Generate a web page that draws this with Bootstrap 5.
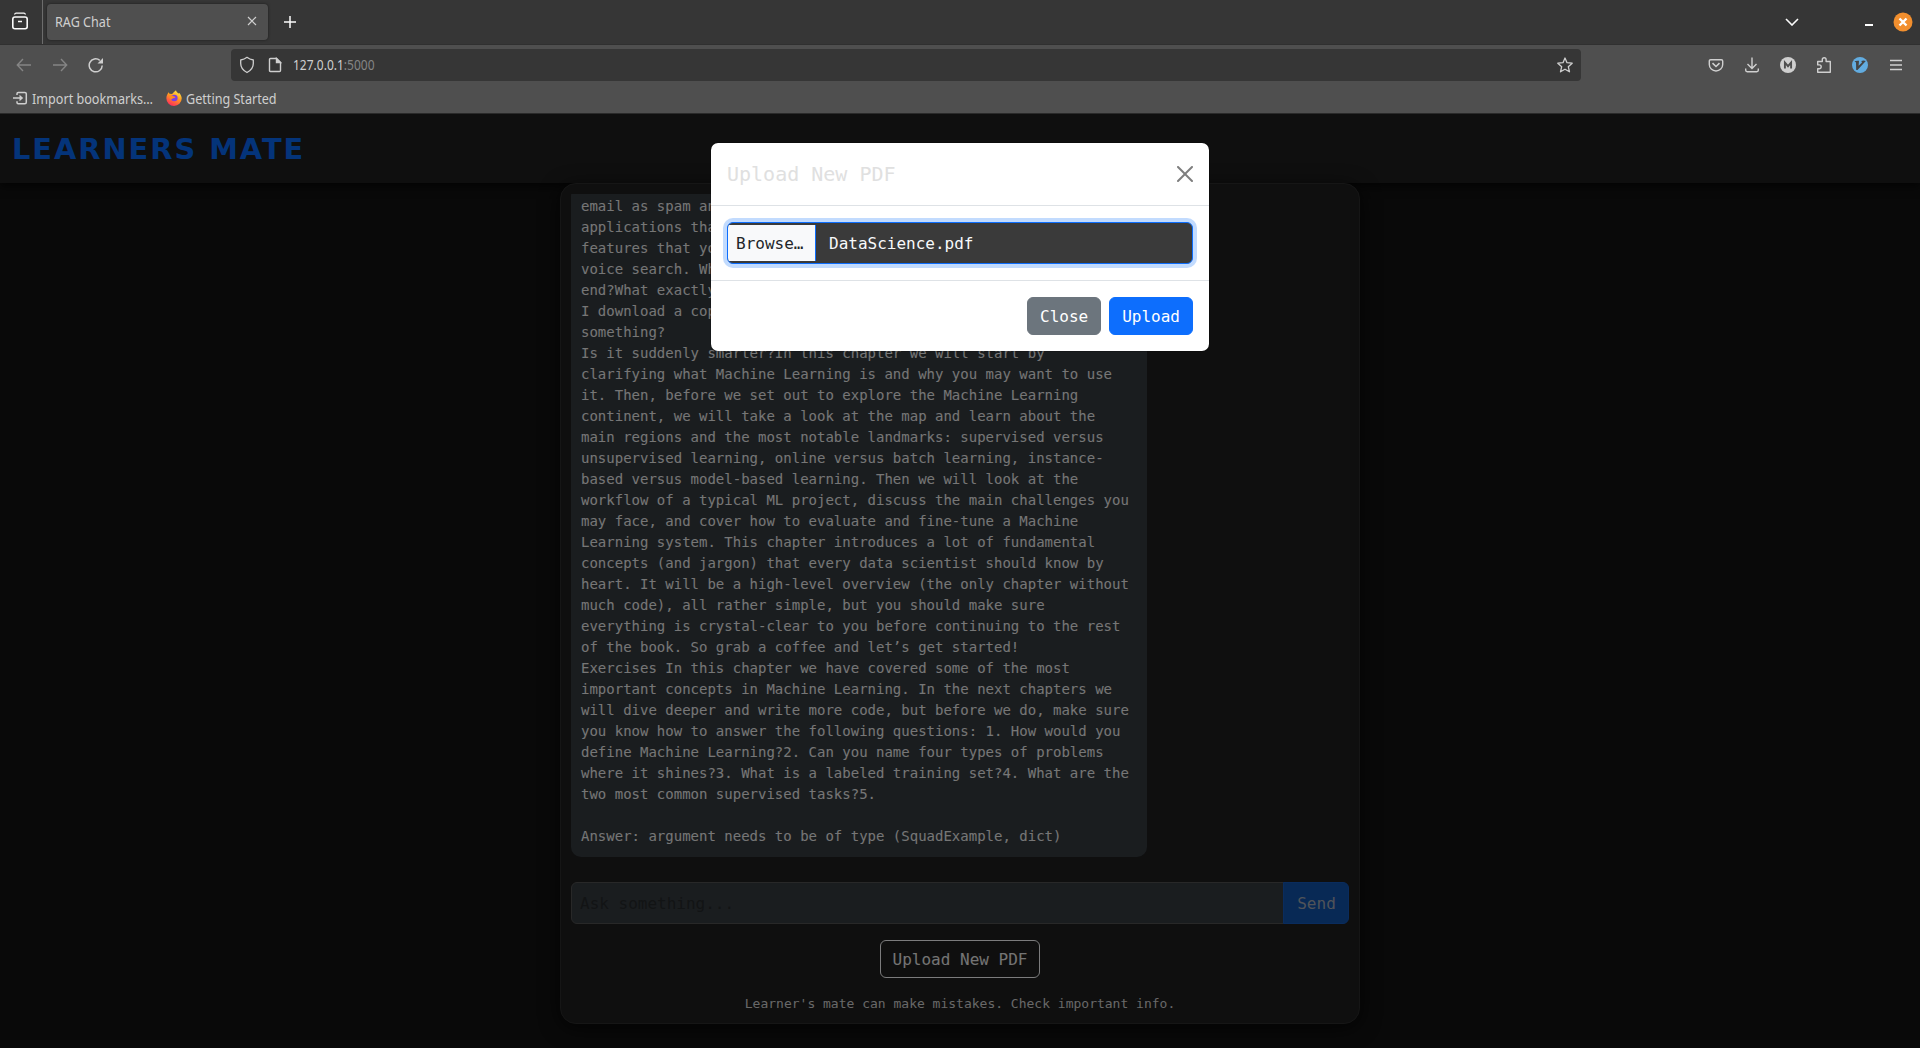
<!DOCTYPE html>
<html lang="en" data-bs-theme="light">
<head>
<meta charset="utf-8">
<meta name="viewport" content="width=device-width, initial-scale=1">
<title>RAG Chat</title>
<link href="https://cdn.jsdelivr.net/npm/bootstrap@5.3.0/dist/css/bootstrap.min.css" rel="stylesheet">
<style>
html, body { height: 100%; }
body { background: #121212; color: #e0e0e0; font-family: "DejaVu Sans Mono", monospace; overflow: hidden; }
svg { display: block; flex: none; }
.browser-ui { font-family: "Noto Sans", "Open Sans", sans-serif; font-size: 15px; color: #cfcfcf; background: #4f4f4f; height: 114px; border-bottom: 1px solid #2a2a2a; }
.squeeze { display: inline-block; transform: scaleX(.84); transform-origin: 0 50%; white-space: nowrap; line-height: 20px; }
.tab-strip { height: 45px; background: #363636; border-bottom: 1px solid #303030; padding-left: 10px; padding-right: 7px; }
.strip-rule { width: 1px; height: 44px; background: #6c6c6c; margin-left: 12px; margin-right: 4px; }
.browser-tab { width: 221px; height: 36px; margin-top: 4px; background: #4f4f4f; border-radius: 4px; box-shadow: 0 0 3px rgba(0,0,0,.5); padding: 0 10px 2px 8px; }
.window-controls .minimize { margin-left: 66px; }
.window-controls .shut { margin-left: 20px; }
.tool-strip { height: 40px; padding: 4px 15px 4px 16px; }
.nav-icons { gap: 20px; }
.address-field { width: 1350px; height: 32px; margin-left: 127px; background: #363636; border-radius: 4px; padding: 0 8px; }
.address-field .doc-icon { margin-left: 13px; }
.address-field .squeeze { margin-left: 11px; padding-bottom: 2px; transform: scaleX(.8); }
.port { color: #858585; }
.extension-icons { gap: 18px; }
.bookmark-strip { height: 28px; padding: 0 12px 2px; }
.import-label { width: 134px; margin-left: 4px; }
.page-area { height: 934px; overflow: hidden; }
.site-header { height: 69px; background: #1e1e1e; box-shadow: 0 4px 8px rgba(0,0,0,.6); padding: 2px 0 0 12px; }
.brand-title { font-family: "DejaVu Sans", sans-serif; font-weight: 700; font-size: 28.8px; letter-spacing: 2px; color: #0969f5; line-height: 1; }
.chat-box { width: 800px; height: 841px; background: #1e1e1e; border: 1px solid #2c2c2c; border-radius: 16px; box-shadow: 0 4px 20px rgba(0,0,0,.7); padding: 10px; }
.messages { height: 673px; overflow: hidden; }
.bubble { width: 576px; padding: 10px; margin-bottom: 10px; background: #343a3f; border-radius: 10px; font-size: 14px; line-height: 21px; color: #ececec; white-space: pre; }
.ask-group { height: 42px; margin-top: 15px; }
.ask-group .form-control { background: #343a3f; border-color: #505050; padding: 2px 8px 0; color: #e0e0e0; }
.ask-group .form-control::placeholder { color: #25282a; opacity: 1; }
.ask-group .btn { width: 66px; padding: 2px 0 0 1px; background: #1052ab; border-color: #1459bb; color: #a0a7b2; }
.btn-pdf { width: 160px; height: 38px; border: 1px solid #f8f9fa; color: #e8e8e8; padding: 1px 0 0; margin-top: 16px; }
.btn-pdf:hover { border-color: #f8f9fa; color: #e4e4e4; }
.notice { font-size: 13px; line-height: 20px; color: #d0d0d0; margin-top: 16px; }
.dim { inset: 0; background: rgba(0,0,0,.5); z-index: 5; }
.modal-layer { z-index: 6; overflow: hidden; }
.modal-layer .modal-title { color: #e0e0e0; }
.modal-layer .modal-footer .btn { padding-top: 7px; padding-bottom: 5px; }
.file-field { height: 42px; background: #3a3a3a; border: 1px solid #0d6efd; border-radius: 6px; box-shadow: 0 0 0 4px rgba(13,110,253,.25); color: #f8f9fa; overflow: hidden; }
.file-pick { height: 36px; width: 88px; line-height: 38px; background: #f8f9fa; color: #212529; border-right: 1px solid #0d6efd; padding-left: 8px; }
.file-label { line-height: 24px; padding: 2px 0 0 5px; }
</style>
</head>
<body>
<header class="browser-ui">
  <div class="tab-strip d-flex">
    <svg class="align-self-center" width="20" height="20" viewBox="0 0 20 20" fill="none" stroke="#fbfbfb"><path d="M4.500 2.400Q5 1.200 6 1.200h8Q15 1.200 15.500 2.400" stroke-width="1.200"/><path d="M5 5h10q2.200 0 2.200 2.200v7.600q0 1.900-2 1.900H5q-2.200 0-2.200-2V7.200Q2.800 5 5 5z" stroke-width="1.600"/><path d="M8 9.500h4" stroke-width="1.500"/></svg>
    <div class="strip-rule"></div>
    <div class="browser-tab d-flex align-items-center justify-content-between">
      <span class="squeeze">RAG Chat</span>
      <svg width="12" height="12" viewBox="0 0 12 12" stroke="#cfcfcf" stroke-width="1.200"><path d="M2 2l8 8M10 2l-8 8"/></svg>
    </div>
    <svg class="align-self-center ms-3" width="12" height="12" viewBox="0 0 12 12" stroke="#fbfbfb" stroke-width="1.500"><path d="M6 0v12M0 6h12"/></svg>
    <div class="window-controls ms-auto d-flex align-items-center">
      <svg width="14" height="8" viewBox="0 0 14 8" fill="none" stroke="#fbfbfb" stroke-width="1.600"><path d="M1 1l6 6 6-6"/></svg>
      <svg class="minimize" width="8" height="12" viewBox="0 0 8 12"><path d="M0 8h8v2H0z" fill="#fff"/></svg>
      <svg class="shut" width="20" height="20" viewBox="0 0 20 20"><circle cx="10" cy="10" r="9.500" fill="#f28f2e"/><path d="M6.500 6.500l7 7M13.500 6.500l-7 7" stroke="#fff" stroke-width="2.400"/></svg>
    </div>
  </div>
  <div class="tool-strip d-flex align-items-center">
    <div class="nav-icons d-flex align-items-center">
      <svg width="16" height="14" viewBox="0 0 16 14" fill="none" stroke="#858585" stroke-width="1.400"><path d="M15 7H1.500M7 1L1.300 7 7 13"/></svg>
      <svg width="16" height="14" viewBox="0 0 16 14" fill="none" stroke="#858585" stroke-width="1.400"><path d="M1 7h13.500M9 1l5.700 6L9 13"/></svg>
      <svg width="16" height="16" viewBox="0 0 16 16" fill="none" stroke="#cfcfcf" stroke-width="1.500"><path d="M14.200 8.500A6.500 6.500 0 1 1 11.800 3.300"/><path d="M15 1v5.500H9.500z" fill="#cfcfcf" stroke="none"/></svg>
    </div>
    <div class="address-field d-flex align-items-center">
      <svg width="16" height="18" viewBox="0 0 16 18" fill="none" stroke="#cfcfcf" stroke-width="1.300"><path d="M8 1.300Q10.500 3.400 14.300 4v3.500c0 4-2.500 7-6.300 9-3.800-2-6.300-5-6.300-9V4Q5.500 3.400 8 1.300z" stroke-linejoin="round"/></svg>
      <svg class="doc-icon" width="14" height="16" viewBox="0 0 14 16" fill="none" stroke="#cfcfcf" stroke-width="1.400"><path d="M2.500 1.500h6L12.500 5.500v8q0 1-1 1h-9q-1 0-1-1v-11q0-1 1-1z"/><path d="M8.500 1.500v4h4z" fill="#cfcfcf"/></svg>
      <span class="squeeze">127.0.0.1<span class="port">:5000</span></span>
      <svg class="ms-auto" width="16" height="16" viewBox="0 0 16 16" fill="none" stroke="#cfcfcf" stroke-width="1.300" stroke-linejoin="round"><path d="M8 1l2 4.700 5.200.5-3.900 3.500 1.200 5.100L8 12.200l-4.500 2.600 1.200-5.100L.8 6.200 6 5.700z"/></svg>
    </div>
    <div class="extension-icons ms-auto d-flex align-items-center">
      <svg width="18" height="18" viewBox="0 0 18 18" fill="none" stroke="#cfcfcf" stroke-width="1.400"><path d="M3.700 3.700h10.600q1.400 0 1.400 1.400v3.400a6.700 6.500 0 0 1-13.400 0V5.100Q2.300 3.700 3.700 3.700z"/><path d="M5.500 7.200L9 10.500l3.500-3.300" stroke-width="1.600"/></svg>
      <svg width="18" height="18" viewBox="0 0 18 18" fill="none" stroke="#cfcfcf" stroke-width="1.400"><path d="M9 1.500v11M4.500 8L9 12.500 13.500 8M2.700 12.500v1.800q0 1.400 1.500 1.400h9.600q1.500 0 1.500-1.400v-1.800"/></svg>
      <svg width="18" height="18" viewBox="0 0 18 18"><circle cx="9" cy="9" r="8" fill="#cfcfcf"/><path d="M5.900 12.500V6.500L9 10.200l3.100-3.700v6" fill="none" stroke="#4f4f4f" stroke-width="1.900"/></svg>
      <svg width="18" height="18" viewBox="0 0 18 18" fill="none" stroke="#cfcfcf" stroke-width="1.400" stroke-linejoin="round"><path d="M2.700 5.500h4.600V3.600a1.900 1.900 0 0 1 3.800 0v1.900h4.200v10.800H2.700v-3.600h1.600a1.900 1.900 0 0 0 0-3.800H2.700z"/></svg>
      <svg width="18" height="18" viewBox="0 0 18 18"><circle cx="9" cy="9" r="8" fill="#62ace0"/><path d="M3.500 5.300Q5.500 4.300 8 4.800L7.600 9.800 11 6.500 10.300 5q2.200-.8 4.500 0L6.500 14H5.200L5 6.500z" fill="#444"/></svg>
      <svg width="18" height="18" viewBox="0 0 18 18" stroke="#cfcfcf" stroke-width="1.300"><path d="M3 4.500h12M3 9h12M3 13.500h12"/></svg>
    </div>
  </div>
  <div class="bookmark-strip d-flex align-items-center">
    <svg width="16" height="16" viewBox="0 0 16 16" fill="none" stroke="#cfcfcf" stroke-width="1.500"><path d="M5 5V3.700Q5 2.500 6.200 2.500h6.600Q14.300 2.500 14.300 3.800v8.400q0 1.500-1.500 1.500H6.200Q5 13.700 5 12.500V11.200M1 8h7"/><path d="M7.500 4.700L11.200 8l-3.700 3.300z" fill="#cfcfcf" stroke="none"/></svg>
    <div class="import-label"><span class="squeeze">Import bookmarks…</span></div>
    <svg width="16" height="16" viewBox="0 0 16 16"><defs><linearGradient id="fox" x1=".8" y1="0" x2=".3" y2="1"><stop offset="0" stop-color="#fff04a"/><stop offset=".45" stop-color="#ff9a20"/><stop offset="1" stop-color="#ff2a5c"/></linearGradient></defs><path d="M10 .2c.2 1.500 1.300 2 2.400 3.200l.9-.3c1.500 1.800 2.400 3.500 2.400 5.500A7.600 7.300 0 0 1 .4 8.500C.3 6 1.300 4.300 2.600 2.300l.9 1.500 2.600.2C7.500 2.500 8.500 1.300 10 .2z" fill="url(#fox)"/><circle cx="8.300" cy="8" r="3.300" fill="#7a3fe0"/><path d="M3 5.500q2.500-.7 4.500.8L9.600 7q-1 1.300-2.700 1.200L5.500 9.500Q3.500 8.500 3 5.500z" fill="#ff8a1e"/></svg>
    <span class="squeeze ms-1">Getting Started</span>
  </div>
</header>
<main class="page-area position-relative">
  <div class="site-header d-flex align-items-center"><div class="brand-title">LEARNERS MATE</div></div>
  <section class="chat-box mx-auto position-relative">
    <div class="messages d-flex flex-column justify-content-end">
      <div class="bubble">email as spam an
applications tha
features that yo
voice search. Wh
end?What exactly
I download a cop
something?
Is it suddenly smarter?In this chapter we will start by
clarifying what Machine Learning is and why you may want to use
it. Then, before we set out to explore the Machine Learning
continent, we will take a look at the map and learn about the
main regions and the most notable landmarks: supervised versus
unsupervised learning, online versus batch learning, instance-
based versus model-based learning. Then we will look at the
workflow of a typical ML project, discuss the main challenges you
may face, and cover how to evaluate and fine-tune a Machine
Learning system. This chapter introduces a lot of fundamental
concepts (and jargon) that every data scientist should know by
heart. It will be a high-level overview (the only chapter without
much code), all rather simple, but you should make sure
everything is crystal-clear to you before continuing to the rest
of the book. So grab a coffee and let’s get started!
Exercises In this chapter we have covered some of the most
important concepts in Machine Learning. In the next chapters we
will dive deeper and write more code, but before we do, make sure
you know how to answer the following questions: 1. How would you
define Machine Learning?2. Can you name four types of problems
where it shines?3. What is a labeled training set?4. What are the
two most common supervised tasks?5.

Answer: argument needs to be of type (SquadExample, dict)</div>
    </div>
    <div class="ask-group input-group">
      <input type="text" class="form-control" placeholder="Ask something...">
      <button class="btn btn-primary" type="button">Send</button>
    </div>
    <div class="text-center"><button class="btn btn-pdf" type="button">Upload New PDF</button></div>
    <div class="notice text-center">Learner's mate can make mistakes. Check important info.</div>
  </section>
  <div class="dim position-absolute"></div>
  <div class="modal modal-layer d-block position-absolute" tabindex="-1">
    <div class="modal-dialog">
      <div class="modal-content">
        <div class="modal-header">
          <h5 class="modal-title">Upload New PDF</h5>
          <button type="button" class="btn-close" aria-label="Close"></button>
        </div>
        <div class="modal-body">
          <div class="file-field d-flex align-items-center">
            <div class="file-pick">Browse…</div>
            <span class="file-label ms-2">DataScience.pdf</span>
          </div>
        </div>
        <div class="modal-footer">
          <button type="button" class="btn btn-secondary">Close</button>
          <button type="button" class="btn btn-primary">Upload</button>
        </div>
      </div>
    </div>
  </div>
</main>
<script src="https://cdn.jsdelivr.net/npm/bootstrap@5.3.0/dist/js/bootstrap.bundle.min.js"></script>
</body>
</html>
